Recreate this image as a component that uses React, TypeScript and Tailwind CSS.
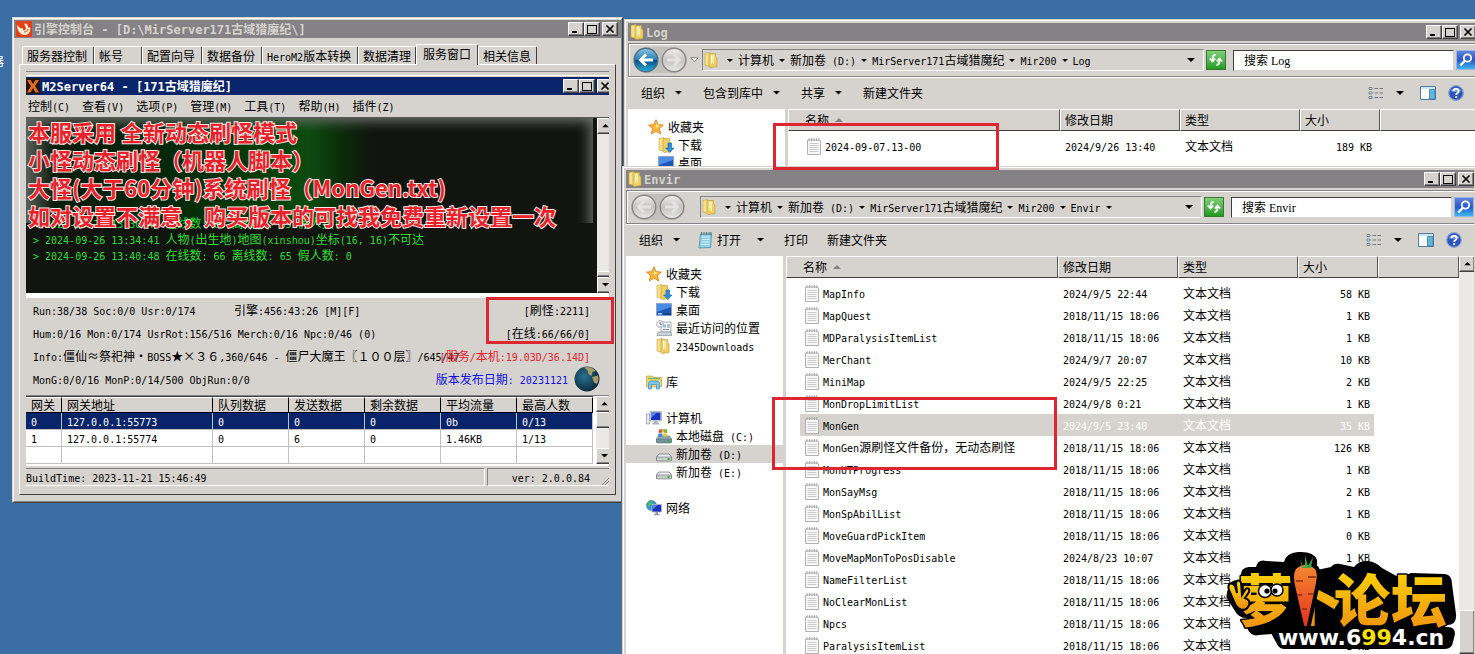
import type { ReactNode } from 'react'
import { clsx } from 'clsx'

const RAISED = 'bg-[#d6d3ce] border border-t-white border-l-white border-r-[#404040] border-b-[#404040] shadow-[inset_-1px_-1px_0_#848284]'

// Latin runs use a half-width mono face, everything else the CJK face
function Txt({ children, bold }: { children: string; bold?: boolean }) {
  const runs = children.match(/[\x20-\x7e]+|[^\x20-\x7e]+/g) ?? []
  return (
    <span className={clsx('whitespace-pre', bold && 'font-bold')}>
      {runs.map((run, i) =>
        /^[\x20-\x7e]/.test(run) ? (
          <span key={i} className={clsx("leading-none font-['DejaVu_Sans_Mono',monospace]", bold ? 'text-[12px]' : 'text-[10px]')}>
            {run}
          </span>
        ) : (
          <span key={i}>{run}</span>
        )
      )}
    </span>
  )
}

function Caret({ className = 'w-[7px]' }: { className?: string }) {
  return (
    <svg viewBox="0 0 8 4" className={clsx('shrink-0', className)} aria-hidden="true">
      <path d="M0 0h8L4 4z" fill="currentColor" />
    </svg>
  )
}

/* ---------- icons ---------- */

function FolderIcon() {
  return (
    <svg viewBox="0 0 14 16" className="h-4 w-[14px] shrink-0" aria-hidden="true">
      <path d="M1 1.5 6 .5v14L1 13z" fill="#f7e08a" stroke="#c9a43c" strokeWidth=".6" />
      <path d="M5 1.5h6.5v3L13 6v8.5L6 15.6 5 14z" fill="#edcf63" stroke="#bf9a35" strokeWidth=".6" />
      <path d="M7 2.5h1.5V10L7 12z" fill="#fffbe0" />
      <path d="M9.5 3v9" stroke="#f9eba8" />
    </svg>
  )
}

function DownloadFolderIcon() {
  return (
    <svg viewBox="0 0 16 16" className="size-4 shrink-0" aria-hidden="true">
      <path d="M1 1.5 6 .5v14L1 13z" fill="#f7e08a" stroke="#c9a43c" strokeWidth=".6" />
      <path d="M5 1.5h6.5v3L13 6v8.5L6 15.6 5 14z" fill="#edcf63" stroke="#bf9a35" strokeWidth=".6" />
      <path d="M10 6h3.5v5H16l-4.2 4.6L7.6 11H10z" fill="#2f8fdb" stroke="#1463a8" strokeWidth=".6" />
    </svg>
  )
}

function StarIcon() {
  return (
    <svg viewBox="0 0 16 16" className="size-4 shrink-0" aria-hidden="true">
      <path d="m8 .8 2.1 4.9 5.3.4-4 3.5 1.2 5.3L8 12.1l-4.6 2.8 1.2-5.3-4-3.5 5.3-.4z" fill="#fcb93a" stroke="#e07b1a" strokeWidth=".9" />
      <path d="m8 3 1.2 3.4 3.2.3-4.4 2z" fill="#fff0a8" />
    </svg>
  )
}

function DesktopIcon() {
  return (
    <svg viewBox="0 0 16 14" className="h-[14px] w-4 shrink-0" aria-hidden="true">
      <path d="M.5.5h15v12H.5z" fill="#1d57b4" stroke="#8aa3c8" />
      <path d="M1 1h14v3L1 9z" fill="#4b8ce6" />
      <path d="M2 10h4v1.5H2z" fill="#9cd0ff" />
      <path d="M7 10.5h8v1.5H7z" fill="#123a7c" />
    </svg>
  )
}

function RecentIcon() {
  return (
    <svg viewBox="0 0 16 16" className="size-4 shrink-0" aria-hidden="true">
      <path d="M5 2h10v10H5z" fill="#f5f8fb" stroke="#8d99a6" strokeWidth=".8" />
      <path d="M7 4.5h3v3H7z" fill="#8fc0ea" />
      <path d="M11 5h3M11 7h3M7 9.5h6" stroke="#7e8d9c" />
      <path d="M2 12h13l1 3.5H1z" fill="#c9d3dc" stroke="#7c8894" strokeWidth=".6" />
      <circle cx="4" cy="4" r="3.4" fill="#fff" stroke="#8d99a6" strokeWidth=".8" />
      <path d="M4 2v2.2h1.8" stroke="#445" strokeWidth=".8" fill="none" />
    </svg>
  )
}

function LibraryIcon() {
  return (
    <svg viewBox="0 0 16 16" className="size-4 shrink-0" aria-hidden="true">
      <path d="M.5 2h6l1 1.5h8V13H.5z" fill="#f0d673" stroke="#c6a440" strokeWidth=".7" />
      <path d="M2 4.5h12" stroke="#79b26a" strokeWidth="1.4" />
      <path d="M2.5 15V9.5C2.500 8 3.500 7 5 7h6c1.500 0 2.500 1 2.500 2.500V15h-3v-4.500h-5V15z" fill="#7cc5ee" stroke="#3a8fc4" strokeWidth=".7" />
    </svg>
  )
}

function ComputerIcon() {
  return (
    <svg viewBox="0 0 16 16" className="size-4 shrink-0" aria-hidden="true">
      <path d="M.5 4h3v10h-3z" fill="#e6eaee" stroke="#8a949e" strokeWidth=".7" />
      <path d="M4 1.500h11.500v9.500H4z" fill="#dfe4e8" stroke="#9aa4ae" strokeWidth=".7" />
      <path d="M5 2.500h9.500V10H5z" fill="#1b34c0" />
      <path d="M5 2.500h6L5 8z" fill="#5c86f0" />
      <path d="M8 11h3.500v2H13v1.500H6.500V13H8z" fill="#aab3bb" />
    </svg>
  )
}

function DriveIcon({ system }: { system?: boolean }) {
  return (
    <svg viewBox="0 0 16 16" className="size-4 shrink-0" aria-hidden="true">
      <path d="M3 8h10l2.500 3v3.500H.5V11z" fill={system ? '#7fb0b4' : '#f0f1f1'} stroke="#73797d" strokeWidth=".8" />
      <path d="M.5 11h15v3q-.5 1-1.500 1H2q-1 0-1.500-1z" fill={system ? '#6c9499' : '#c8cccd'} stroke="#6d7276" strokeWidth=".6" />
      <path d="M11.500 12h2v2h-2z" fill="#3fa82e" />
      {system && (
        <g>
          <path d="M3 1.500 6.500 1v3.500L2.500 5z" fill="#e8552d" />
          <path d="m7.300 1 4 .6-.4 3.600-3.600-.6z" fill="#7db72f" />
          <path d="m2.400 5.700 4-.5v3L2 8.500z" fill="#3b86e0" />
          <path d="m7.300 5.200 3.500.6-.4 3-3.100-.6z" fill="#f6c31c" />
        </g>
      )}
    </svg>
  )
}

function NetworkIcon() {
  return (
    <svg viewBox="0 0 16 16" className="size-4 shrink-0" aria-hidden="true">
      <circle cx="5.500" cy="5.500" r="5" fill="#2f9fd0" stroke="#1f74a3" strokeWidth=".6" />
      <path d="M2 3c2-2 4-2 5-1L5 5 3 5.500 1.500 8z" fill="#56bb52" />
      <path d="M6 4.500h9.500v7.500H6z" fill="#1b34c0" stroke="#b3bcc6" strokeWidth=".9" />
      <path d="M6.700 5.200h5l-5 4z" fill="#5c86f0" />
      <path d="M9.500 12h2.500v2h1.500v1.300H8V14h1.500z" fill="#8f9aa4" />
    </svg>
  )
}

function TextFileIcon() {
  return (
    <svg viewBox="0 0 14 17" className="h-[17px] w-[14px] shrink-0" aria-hidden="true">
      <path d="M1 2h11.500l1 1v13.500H.5V2z" fill="#f8f8f8" stroke="#a8a8a8" strokeWidth=".9" />
      <path d="M2 0v3M4.500 0v3M7 0v3M9.500 0v3M11.800 0v3" stroke="#9c9c9c" strokeWidth=".8" />
      <path d="M2.500 5.500h9M2.500 7.500h9M2.500 9.500h9M2.500 11.500h9M2.500 13.500h9" stroke="#c4c4c4" strokeWidth=".9" />
    </svg>
  )
}

function NotepadIcon() {
  return (
    <svg viewBox="0 0 15 17" className="h-[17px] w-[15px] shrink-0" aria-hidden="true">
      <path d="M2.500 2h11l-1 13.500-11.500.5z" fill="#8fd0e6" stroke="#4c8ba8" strokeWidth=".8" />
      <path d="M4 5h8M3.800 7.500h8M3.600 10h8M3.400 12.500h8" stroke="#d6f1fa" strokeWidth=".9" />
      <path d="M3.500 0v3M6 0v3M8.500 0v3M11 0v3M13 0v3" stroke="#47606c" strokeWidth=".9" />
    </svg>
  )
}

function ViewsIcon() {
  return (
    <svg viewBox="0 0 16 14" className="h-[14px] w-4 shrink-0" aria-hidden="true">
      <path d="M1 1.500h3v2H1zM1 6h3v2H1zM1 10.500h3v2H1z" fill="#fff" stroke="#6d8196" />
      <path d="M6.500 2.500h3.500M11.500 2.500H15M6.500 7h3.500M11.500 7H15M6.500 11.500h3.500M11.500 11.500H15" stroke="#6b7480" />
    </svg>
  )
}

function PaneIcon() {
  return (
    <svg viewBox="0 0 16 14" className="h-[14px] w-4 shrink-0" aria-hidden="true">
      <path d="M.5.5h15v13H.5z" fill="#fff" stroke="#4d7ba3" />
      <path d="M1 1h14v2H1z" fill="#cfe3f3" />
      <path d="M9.500 3.500H15V13H9.500z" fill="#61b4dc" stroke="#3e7ba6" strokeWidth=".8" />
    </svg>
  )
}

function HelpIcon() {
  return (
    <svg viewBox="0 0 16 16" className="size-4 shrink-0" aria-hidden="true">
      <circle cx="8" cy="8" r="7.300" fill="#2c56bd" stroke="#8ba1cc" strokeWidth="1.200" />
      <path d="M2.500 6a6 5 0 0 1 11 0q-5.500 2-11 0z" fill="#6d94e6" />
      <path d="M5.500 6.200c0-3.200 5.200-3.200 5.200 0 0 1.900-2.600 1.900-2.600 3.800" fill="none" stroke="#fff" strokeWidth="1.800" />
      <path d="M7.200 11.200h1.900v1.800H7.200z" fill="#fff" />
    </svg>
  )
}

function NavArrow({ dir, active }: { dir: 'back' | 'forward'; active?: boolean }) {
  return (
    <svg viewBox="0 0 26 26" className="size-[26px]" aria-hidden="true">
      <defs>
        <linearGradient id="navBlue" x1="0" y1="0" x2="0" y2="1">
          <stop offset="0" stopColor="#8cc6e6" />
          <stop offset=".48" stopColor="#2c7fb5" />
          <stop offset=".52" stopColor="#0a4f86" />
          <stop offset="1" stopColor="#21b4e4" />
        </linearGradient>
        <linearGradient id="navGray" x1="0" y1="0" x2="0" y2="1">
          <stop offset="0" stopColor="#f2f2f0" />
          <stop offset=".5" stopColor="#c4c3c1" />
          <stop offset="1" stopColor="#e9e8e6" />
        </linearGradient>
      </defs>
      <circle cx="13" cy="13" r="11.800" fill={active ? 'url(#navBlue)' : 'url(#navGray)'} stroke={active ? '#4b6d84' : '#888684'} strokeWidth="1.400" />
      <path
        d={dir === 'back' ? 'M20 13H8M13 7.500 7.500 13l5.500 5.500' : 'M6 13h12M13 7.500l5.500 5.500-5.500 5.500'}
        fill="none"
        stroke={active ? '#fff' : '#e4e3e1'}
        strokeWidth="2.800"
      />
    </svg>
  )
}

/* ---------- window chrome ---------- */

function WinButton({ label, className, children }: { label: string; className?: string; children: ReactNode }) {
  return (
    <button type="button" aria-label={label} className={clsx('flex h-[14px] w-4 shrink-0 items-center justify-center', RAISED, className)}>
      <svg viewBox="0 0 10 10" className="size-[10px]" fill="none" stroke="#000" aria-hidden="true" shapeRendering="crispEdges">
        {children}
      </svg>
    </button>
  )
}

function TitleBar({ icon, title, active, className }: { icon: ReactNode; title: string; active?: boolean; className?: string }) {
  return (
    <div
      className={clsx(
        'flex h-[18px] items-center',
        active ? 'bg-[#08246b] text-white' : 'bg-[#848284] text-[#d6d3ce]',
        className
      )}
    >
      {icon}
      <h2 className="ml-[2px] flex-1 leading-[18px]">
        <Txt bold>{title}</Txt>
      </h2>
      <WinButton label="最小化">
        <path d="M1 8h5" strokeWidth="2" />
      </WinButton>
      <WinButton label="最大化">
        <path d="M.5 1h9M.5 9.500h9M.5 1v8.500M9.500 1v8.500M.5 1.500h9" />
      </WinButton>
      <WinButton label="关闭" className="ml-[2px]">
        <path d="m1.500 1.500 7 7M8.500 1.500l-7 7" strokeWidth="1.600" shapeRendering="auto" />
      </WinButton>
    </div>
  )
}

function ScrollButton({ dir, className }: { dir: 'up' | 'down'; className?: string }) {
  return (
    <button type="button" aria-label={dir === 'up' ? '向上滚动' : '向下滚动'} className={clsx('flex h-4 w-4 shrink-0 items-center justify-center', RAISED, className)}>
      <Caret className={clsx('w-[7px]', dir === 'up' && 'rotate-180')} />
    </button>
  )
}

/* ---------- file explorer ---------- */

type FileRow = { name: string; date: string; size: string; selected?: boolean }
type NavItem = { label: string; icon: ReactNode; level: 1 | 2; selected?: boolean } | null

const CELL = 'border-t border-l border-r border-b border-t-white border-l-white border-r-[#5a5856] border-b-[#404040] bg-[#d6d3ce] pl-1 text-left font-normal'

function FileTable({ rows }: { rows: FileRow[] }) {
  return (
    <table className="w-full table-fixed border-separate border-spacing-0">
      <colgroup>
        <col className="w-[272px]" />
        <col className="w-[120px]" />
        <col className="w-[120px]" />
        <col className="w-[80px]" />
        <col />
      </colgroup>
      <thead>
        <tr className="h-[22px] leading-5">
          <th className={clsx(CELL, 'pl-4')}>
            <span className="flex items-center gap-[6px]">
              名称
              <Caret className="w-[8px] rotate-180 text-[#848284]" />
            </span>
          </th>
          <th className={CELL}>修改日期</th>
          <th className={CELL}>类型</th>
          <th className={CELL}>大小</th>
          <th className={CELL} aria-label="空白列" />
        </tr>
      </thead>
      <tbody>
        <tr className="h-1">
          <td colSpan={5} />
        </tr>
        {rows.map((row) => {
          const bg = row.selected && 'bg-[#d6d3ce]'
          const fg = row.selected && 'text-white'
          return (
            <tr key={row.name} className="h-[22px] leading-[22px]">
              <td className="pl-[14px]">
                <div className={clsx('flex h-[22px] items-center gap-1 whitespace-nowrap pl-[5px]', bg)}>
                  <TextFileIcon />
                  <Txt>{row.name}</Txt>
                </div>
              </td>
              <td>
                <div className={clsx('h-[22px] pl-[5px]', bg, fg)}>
                  <Txt>{row.date}</Txt>
                </div>
              </td>
              <td>
                <div className={clsx('h-[22px] pl-[5px]', bg, fg)}>文本文档</div>
              </td>
              <td>
                <div className={clsx('mr-1 h-[22px] pr-1 text-right', bg, fg)}>
                  <Txt>{row.size}</Txt>
                </div>
              </td>
              <td />
            </tr>
          )
        })}
      </tbody>
    </table>
  )
}

interface ExplorerProps {
  title: string
  path: string[]
  canGoBack?: boolean
  trailing?: boolean
  toolbar: ReactNode
  nav: NavItem[]
  rows: FileRow[]
  scrollbar?: boolean
  className?: string
}

function Explorer({ title, path, canGoBack, trailing, toolbar, nav, rows, scrollbar, className }: ExplorerProps) {
  return (
    <section
      aria-label={title}
      className={clsx('absolute flex flex-col border border-[#d6d3ce] bg-[#d6d3ce] p-[3px] shadow-[inset_1px_1px_0_#fff,-1px_0_0_#5a6a80]', className)}
    >
      <TitleBar icon={<FolderIcon />} title={title} className="shrink-0 pl-[2px]" />

      <div className="mt-[2px] flex h-[34px] shrink-0 items-center border-y border-l border-y-[#848284] border-l-[#848284] pl-1 shadow-[inset_1px_1px_0_#fff,0_1px_0_#fff]">
        <div className="flex w-[54px] shrink-0 gap-[2px] rounded-full bg-[#c2c0bd]">
          <button type="button" aria-label="后退">
            <NavArrow dir="back" active={canGoBack} />
          </button>
          <button type="button" aria-label="前进">
            <NavArrow dir="forward" />
          </button>
        </div>
        <span className="flex w-[15px] shrink-0 justify-center">
          {canGoBack && (
            <svg viewBox="0 0 10 6" className="w-[9px]" aria-hidden="true">
              <path d="M.8.8h8.400L5 5.300z" fill="#fff" stroke="#77777c" />
            </svg>
          )}
        </span>
        <div className="flex h-[22px] min-w-0 flex-1 items-center border border-t-[#848284] border-l-[#848284] border-r-white border-b-white pl-px leading-[18px]">
          <FolderIcon />
          <nav aria-label="路径" className="ml-[9px] flex items-center gap-[5px]">
            {path.map((part) => (
              <button key={part} type="button" className="flex items-center gap-[5px]">
                <Caret className="w-[6px]" />
                <Txt>{part}</Txt>
              </button>
            ))}
            {trailing && <Caret className="w-[6px]" />}
          </nav>
          <button type="button" aria-label="以前的位置" className="ml-auto mr-2">
            <Caret className="w-[8px]" />
          </button>
        </div>
        <button type="button" aria-label="刷新" className="ml-[2px] flex size-5 shrink-0 items-center justify-center border border-[#3a7a30] bg-linear-to-b from-[#7fd07a] to-[#1f9a1c]">
          <svg viewBox="0 0 16 16" className="size-4" fill="none" stroke="#fff" strokeWidth="1.800" aria-hidden="true">
            <path d="M7.500 3C5 3 4.500 4.500 4.500 8M1.800 6.500l2.700 3 2.700-3" />
            <path d="M8.500 13c2.500 0 3-1.500 3-5M8.800 9.500l2.700-3 2.700 3" />
          </svg>
        </button>
        <input
          type="text"
          aria-label={`搜索 ${title}`}
          defaultValue={`搜索 ${title}`}
          className="ml-[7px] h-[21px] w-[221px] shrink-0 border border-t-[#404040] border-l-[#404040] border-r-[#d6d3ce] border-b-[#d6d3ce] bg-white pl-[10px] font-['Liberation_Serif','Noto_Sans_CJK_SC',serif] text-[12px] outline-none"
        />
        <button type="button" aria-label="搜索" className="ml-[2px] flex size-5 shrink-0 items-center justify-center border border-[#9db5e6] bg-linear-to-b from-[#5f83d8] via-[#2a56c8] to-[#41b5f0]">
          <svg viewBox="0 0 16 16" className="size-4" fill="none" stroke="#fff" aria-hidden="true">
            <circle cx="9.500" cy="6" r="3.700" strokeWidth="1.800" />
            <path d="m6.800 8.700-4.500 4.800" strokeWidth="2.400" />
          </svg>
        </button>
      </div>

      <div className="flex h-8 shrink-0 items-center pl-[13px] pr-3 leading-5">
        {toolbar}
        <div className="ml-auto flex items-center">
          <button type="button" aria-label="更改视图" className="flex items-center gap-3">
            <ViewsIcon />
            <Caret className="w-[8px]" />
          </button>
          <button type="button" aria-label="预览窗格" className="ml-4">
            <PaneIcon />
          </button>
          <button type="button" aria-label="帮助" className="ml-3">
            <HelpIcon />
          </button>
        </div>
      </div>

      <div className="flex min-h-0 flex-1 overflow-hidden bg-white">
        <ul className="w-[157px] shrink-0 pt-[9px]">
          {nav.map((item, i) => (
            <li key={i} className={clsx('h-[18px] leading-[18px]', item?.selected && 'bg-[#d6d3ce]')}>
              {item && (
                <a href="#" className={clsx('flex items-center gap-1 whitespace-nowrap', item.level === 1 ? 'pl-5' : 'pl-[30px]')}>
                  <span className="flex w-4 shrink-0">{item.icon}</span>
                  <Txt>{item.label}</Txt>
                </a>
              )}
            </li>
          ))}
        </ul>
        <div className="w-[3px] shrink-0 bg-[#d6d3ce]" />
        <div className="min-w-0 flex-1 overflow-hidden">
          <FileTable rows={rows} />
        </div>
        {scrollbar && (
          <div className="flex w-[15px] shrink-0 flex-col bg-[#ebe9e6]">
            <ScrollButton dir="up" />
            <div className="flex-1" />
            <div className={clsx('h-[44px] w-4', RAISED)} />
          </div>
        )}
      </div>
    </section>
  )
}

function ToolItem({ label, caret, icon, className }: { label: string; caret?: boolean; icon?: ReactNode; className?: string }) {
  return (
    <button type="button" className={clsx('flex shrink-0 items-center', className)}>
      {icon}
      {label}
      {caret && <Caret className={clsx('w-[7px]', icon ? 'ml-4' : 'ml-[10px]')} />}
    </button>
  )
}

/* ---------- data ---------- */

const LOG_NAV: NavItem[] = [
  { label: '收藏夹', icon: <StarIcon />, level: 1 },
  { label: '下载', icon: <DownloadFolderIcon />, level: 2 },
  { label: '桌面', icon: <DesktopIcon />, level: 2 },
]

const ENVIR_NAV: NavItem[] = [
  ...LOG_NAV,
  { label: '最近访问的位置', icon: <RecentIcon />, level: 2 },
  { label: '2345Downloads', icon: <FolderIcon />, level: 2 },
  null,
  { label: '库', icon: <LibraryIcon />, level: 1 },
  null,
  { label: '计算机', icon: <ComputerIcon />, level: 1 },
  { label: '本地磁盘 (C:)', icon: <DriveIcon system />, level: 2 },
  { label: '新加卷 (D:)', icon: <DriveIcon />, level: 2, selected: true },
  { label: '新加卷 (E:)', icon: <DriveIcon />, level: 2 },
  null,
  { label: '网络', icon: <NetworkIcon />, level: 1 },
]

const OLD = '2018/11/15 18:06'

const ENVIR_FILES: FileRow[] = [
  { name: 'MapInfo', date: '2024/9/5 22:44', size: '58 KB' },
  { name: 'MapQuest', date: OLD, size: '1 KB' },
  { name: 'MDParalysisItemList', date: OLD, size: '1 KB' },
  { name: 'MerChant', date: '2024/9/7 20:07', size: '10 KB' },
  { name: 'MiniMap', date: '2024/9/5 22:25', size: '2 KB' },
  { name: 'MonDropLimitList', date: '2024/9/8 0:21', size: '1 KB' },
  { name: 'MonGen', date: '2024/9/5 23:40', size: '35 KB', selected: true },
  { name: 'MonGen源刷怪文件备份，无动态刷怪', date: OLD, size: '126 KB' },
  { name: 'MonUTProgress', date: OLD, size: '1 KB' },
  { name: 'MonSayMsg', date: OLD, size: '2 KB' },
  { name: 'MonSpAbilList', date: OLD, size: '1 KB' },
  { name: 'MoveGuardPickItem', date: OLD, size: '0 KB' },
  { name: 'MoveMapMonToPosDisable', date: '2024/8/23 10:07', size: '1 KB' },
  { name: 'NameFilterList', date: OLD, size: '1 KB' },
  { name: 'NoClearMonList', date: OLD, size: '1 KB' },
  { name: 'Npcs', date: OLD, size: '1 KB' },
  { name: 'ParalysisItemList', date: OLD, size: '1 KB' },
]

const TABS = [
  { label: '服务器控制', width: 'w-[72px]' },
  { label: '帐号', width: 'w-[48px]' },
  { label: '配置向导', width: 'w-[60px]' },
  { label: '数据备份', width: 'w-[60px]' },
  { label: 'HeroM2版本转换', width: 'w-[96px]' },
  { label: '数据清理', width: 'w-[58px]' },
  { label: '服务窗口', width: 'w-[62px]' },
  { label: '相关信息', width: 'w-[59px]' },
]

const GATE_HEAD = ['网关', '网关地址', '队列数据', '发送数据', '剩余数据', '平均流量', '最高人数']
const GATES = [
  ['0', '127.0.0.1:55773', '0', '0', '0', '0b', '0/13'],
  ['1', '127.0.0.1:55774', '0', '6', '0', '1.46KB', '1/13'],
  ['', '', '', '', '', '', ''],
]

/* ---------- M2Server console ---------- */

function GateTable() {
  return (
    <div className="flex border-t border-[#848284] bg-white pb-[2px]">
      <table className="w-[567px] table-fixed border-separate border-spacing-0 border-t border-t-[#404040]">
        <colgroup>
          <col className="w-[36px]" />
          <col className="w-[151px]" />
          <col className="w-[76px]" span={5} />
        </colgroup>
        <thead>
          <tr className="h-[16px] leading-[14px]">
            {GATE_HEAD.map((h) => (
              <th key={h} className="border-r border-b border-t border-[#000] border-t-white bg-[#d6d3ce] pl-[5px] text-left font-normal">
                {h}
              </th>
            ))}
          </tr>
        </thead>
        <tbody>
          {GATES.map((gate, i) => (
            <tr key={i} className={clsx('h-[17px] leading-4', i === 0 && 'bg-[#08246b] text-white')}>
              {gate.map((v, j) => (
                <td key={j} className="border-r border-b border-[#c0c0c0] pl-[5px]">
                  <Txt>{v}</Txt>
                </td>
              ))}
            </tr>
          ))}
        </tbody>
      </table>
      <div className="ml-[3px] flex flex-1 flex-col overflow-hidden bg-[#ebe9e6]">
        <ScrollButton dir="up" />
        <div className={clsx('h-4 w-4', RAISED)} />
        <div className="flex-1" />
        <ScrollButton dir="down" />
      </div>
    </div>
  )
}

function ServerPanel() {
  return (
    <div className="mt-[6px] ml-[6px] mr-[6px] overflow-hidden border-t border-t-[#848284]">
      <div className="mt-[3px] border-t border-white pt-px">
        <TitleBar
          active
          title="M2Server64 - [171古域猎魔纪]"
          className="-mr-[7px] pr-[3px]"
          icon={
            <svg viewBox="0 0 14 16" className="h-4 w-[14px]" aria-hidden="true">
              <path d="M0 0h14v16H0z" fill="#1f1712" />
              <path d="M1 2h3.500L7 6l2.500-4H13L9 8l4 6.500H9.500L7 10l-2.500 4.500H1L5 8z" fill="#e86a1c" />
            </svg>
          }
        />
      </div>
      <div className="flex h-[22px] items-center gap-3 pl-[2px] leading-5">
        {['控制(C)', '查看(V)', '选项(P)', '管理(M)', '工具(T)', '帮助(H)', '插件(Z)'].map((m) => (
          <button key={m} type="button">
            <Txt>{m}</Txt>
          </button>
        ))}
      </div>

      <div className="flex h-[176px] border-t border-[#5a5856] bg-[#121410]">
        <div className="min-w-0 flex-1">
          <div className="mr-1 h-[105px] bg-[linear-gradient(90deg,#5a5f5a_0%,#0b1c0b_5%,#04280a_25%,#063a08_40%,#0d4c10_50%,#0a2a0a_56%,#121410_61%)] shadow-[inset_-12px_12px_12px_-8px_#686a66]" />
          <div className="-mt-2 pl-[7px] leading-4 text-[#31dd31]">
            <p>
              <Txt>{'> 2024-09-26 13:30:48 在线数: 66 离线数: 65 假人数: 0'}</Txt>
            </p>
            <p>
              <Txt>{'> 2024-09-26 13:34:41 人物(出生地)地图(xinshou)坐标(16, 16)不可达'}</Txt>
            </p>
            <p>
              <Txt>{'> 2024-09-26 13:40:48 在线数: 66 离线数: 65 假人数: 0'}</Txt>
            </p>
          </div>
        </div>
        <div className="flex w-3 flex-col overflow-hidden bg-[#ebe9e6]">
          <ScrollButton dir="up" />
          <div className="flex-1" />
          <div className={clsx('h-[6px] w-4', RAISED)} />
          <ScrollButton dir="down" />
        </div>
      </div>
      <div className="h-[5px] bg-white" />

      <div className="pl-[7px] pr-[19px] leading-[23px]">
        <div className="flex">
          <span className="w-[201px]">
            <Txt>Run:38/38 Soc:0/0 Usr:0/174</Txt>
          </span>
          <Txt>引擎:456:43:26 [M][F]</Txt>
          <span className="ml-auto">
            <Txt>[刷怪:2211]</Txt>
          </span>
        </div>
        <div className="flex justify-between">
          <Txt>Hum:0/16 Mon:0/174 UsrRot:156/516 Merch:0/16 Npc:0/46 (0)</Txt>
          <Txt>[在线:66/66/0]</Txt>
        </div>
        <div className="flex">
          <span className="min-w-0 flex-1">
            <Txt>Info:僵仙≈祭祀神·BOSS★×３６,360/646 - 僵尸大魔王〖１００层〗/645/47</Txt>
          </span>
          <span className="shrink-0 text-[#e8202a]">
            <Txt>[服务/本机:19.03D/36.14D]</Txt>
          </span>
        </div>
        <div className="-mr-[10px] flex items-center">
          <span className="flex-1">
            <Txt>MonG:0/0/16 MonP:0/14/500 ObjRun:0/0</Txt>
          </span>
          <span className="text-[#1010e0]">
            <Txt>版本发布日期: 20231121</Txt>
          </span>
          <svg viewBox="0 0 26 26" className="-my-1 ml-[6px] size-[26px]" aria-hidden="true">
            <defs>
              <radialGradient id="globe" cx=".4" cy=".4" r=".6">
                <stop offset="0" stopColor="#2a7391" />
                <stop offset="1" stopColor="#0d2c40" />
              </radialGradient>
            </defs>
            <circle cx="13" cy="13" r="12.500" fill="url(#globe)" />
            <path d="M10 1.500c4-1.500 9 0 11.500 3.500l-3 1-1 4-3-2-1-3.500zM18 11l6-1.500c1 3 .5 6-1 8.500l-3-1.500z" fill="#a59c6c" />
          </svg>
        </div>
      </div>

      <div className="mt-[5px]">
        <GateTable />
      </div>
      <div className="mt-[2px] flex h-[18px] gap-[2px] leading-4">
        <div className="flex-1 border-y border-r border-y-[#848284] border-b-white border-r-white">
          <Txt>BuildTime: 2023-11-21 15:46:49</Txt>
        </div>
        <div className="relative w-[122px] border-y border-l border-[#848284] border-b-white pr-[19px] text-right">
          <Txt>ver: 2.0.0.84</Txt>
          <svg viewBox="0 0 8 8" className="absolute right-0 bottom-0 size-2" stroke="#848284" aria-hidden="true">
            <path d="M1 8l7-7M4 8l4-4" />
          </svg>
        </div>
      </div>
    </div>
  )
}

function ControlWindow() {
  return (
    <section
      aria-label="引擎控制台"
      className="absolute top-[17px] left-[12px] w-[611px] border border-[#d6d3ce] border-r-[#404040] border-b-[#404040] bg-[#d6d3ce] p-px pt-[2px] pb-[7px] shadow-[inset_1px_1px_0_#fff,inset_-1px_-1px_0_#848284]"
    >
      <TitleBar
        title="引擎控制台 - [D:\MirServer171古域猎魔纪\]"
        className="pl-[2px] pr-[3px]"
        icon={
          <svg viewBox="0 0 16 16" className="size-4" aria-hidden="true">
            <path d="M0 0h16v16H0z" fill="#e5401a" />
            <path d="M9 2C7 5 12 6 9 9c-1 1-3 0-2-2-4 1-4-2-6-3 0 5 3 10 8 10 4 0 6-4 5-8-1 1-2 1-2 0 0-2-1-3-3-4z" fill="#fff3d0" />
            <path d="M8 11c2 0 4-1 4-3" stroke="#e5401a" fill="none" />
          </svg>
        }
      />
      <div role="tablist" className="mt-[6px] flex h-5 items-end pl-2 leading-[18px]">
        {TABS.map((tab) => {
          const selected = tab.label === '服务窗口'
          return (
            <button
              key={tab.label}
              type="button"
              role="tab"
              aria-selected={selected}
              className={clsx(
                'shrink-0 rounded-t-[2px] border-t border-l border-r border-t-white border-l-white border-r-[#404040] bg-[#d6d3ce] pl-1 text-left whitespace-nowrap',
                selected ? 'relative z-10 -mb-px h-[21px] pb-1 pl-[6px]' : 'h-[18px]',
                tab.width
              )}
            >
              <Txt>{tab.label}</Txt>
            </button>
          )
        })}
      </div>
      <div role="tabpanel" className="mr-[5px] ml-[5px] border border-white border-r-[#404040] border-b-[#404040] pb-2">
        <ServerPanel />
      </div>
    </section>
  )
}

/* ---------- overlays ---------- */

const STROKED = '[paint-order:stroke] [stroke-linejoin:round]'

function ForumLogo() {
  return (
    <svg viewBox="0 0 240 104" className="absolute right-[12px] bottom-0 h-[104px] w-[240px]" role="img" aria-label="萝卜论坛">
      <defs>
        <linearGradient id="gold" x1="0" y1="0" x2="0" y2="1">
          <stop offset="0" stopColor="#ffe100" />
          <stop offset="1" stopColor="#ee8a12" />
        </linearGradient>
        <linearGradient id="carrot" x1="0" y1="0" x2="0" y2="1">
          <stop offset="0" stopColor="#f28a2e" />
          <stop offset="1" stopColor="#e5301f" />
        </linearGradient>
      </defs>
      {/* black backing shared by glyphs, hand and carrot */}
      <path
        d="M6 38q0-8 9-8l4 2-1-8q0-6 8-7h7q2-8 10-6l18 1q2-9 14-10 16-1 19 8v10l14-3q3-4 9-3l14 3q5-7 14-6 8 1 14 7l18 10 6-3 5-2 34 1q7 1 7 10l4 30q1 11-9 11l-25 5-24 2H76l-40 3q-7 2-11-5-2-5 1-12-10 1-14-7L5 50q-3-7 1-12z"
        fill="#000"
      />
      <path d="M55 77h170q7 0 7 7l-2 8q-1 7-8 7H62q-6 0-8-5l-5-9q-1-7 6-8z" fill="#000" />
      <g className={clsx("font-['Noto_Sans_CJK_SC',sans-serif] font-black", STROKED)} fill="url(#gold)" stroke="#000" strokeWidth="3">
        <text x="15" y="71" fontSize="56">萝</text>
        <text x="64" y="70" fontSize="56">卜</text>
        <text x="111" y="71" fontSize="56">论</text>
        <text x="168" y="72" fontSize="56">坛</text>
      </g>
      <path d="M12 36c-4-5-8-2-6 4l6 14c3 6 10 8 13 3 3-4 1-8-3-9l4-6c1-4-2-5-4-2l-3 5-1-12c-1-4-5-3-5 1l1 9z" fill="url(#gold)" stroke="#000" strokeWidth="2" />
      <circle cx="42" cy="41" r="6.500" fill="#fff" stroke="#000" strokeWidth="1.500" />
      <circle cx="54" cy="40" r="6" fill="#fff" stroke="#000" strokeWidth="1.500" />
      <circle cx="44" cy="41" r="2.600" />
      <circle cx="52" cy="41" r="2.600" />
      <path d="M73 19q9-8 19 0 3 4 1 14L84 75q-1 3-3 0L73 40q-4-15 0-21z" fill="url(#carrot)" stroke="#000" strokeWidth="8" className={STROKED} />
      <path d="M73 31h7M85 27h8M74 45h5M85 44h6M79 59h5" stroke="#8c2a10" strokeWidth="1.600" />
      <path d="m77 8 3 9h2V5l3 11 5-9-2 11h-9z" fill="#35a34b" />
      <text x="55" y="95" fontSize="22" fill="#fff" stroke="#000" strokeWidth="2" className={clsx("font-['DejaVu_Sans',sans-serif] font-bold", STROKED)}>
        www.6<tspan fill="#ffe100">99</tspan>4.cn
      </text>
    </svg>
  )
}

function Notice() {
  return (
    <div className={clsx("pointer-events-none absolute top-[117px] left-[28px] text-[22px] leading-[28px] font-bold whitespace-nowrap text-[#e8212b] [-webkit-text-stroke:2px_#f6e8e4]", STROKED)}>
      <p>本服采用 全新动态刷怪模式</p>
      <p>小怪动态刷怪（机器人脚本）</p>
      <p>大怪(大于60分钟)系统刷怪（MonGen.txt)</p>
      <p>如对设置不满意，购买版本的可找我免费重新设置一次</p>
    </div>
  )
}

export default function App() {
  return (
    <main className="relative h-screen min-h-[654px] overflow-hidden bg-[#3a6ea5] font-['Noto_Sans_CJK_SC',sans-serif] text-[12px] leading-4 text-black" lang="zh-CN">
      <span className="absolute top-[53px] left-[-8px] text-white">器</span>

      <ControlWindow />

      <Explorer
        title="Log"
        path={['计算机', '新加卷 (D:)', 'MirServer171古域猎魔纪', 'Mir200', 'Log']}
        canGoBack
        nav={LOG_NAV}
        rows={[{ name: '2024-09-07.13-00', date: '2024/9/26 13:40', size: '189 KB' }]}
        className="top-[19px] right-[-5px] left-[624px] h-[160px]"
        toolbar={
          <>
            <ToolItem label="组织" caret />
            <ToolItem label="包含到库中" caret className="ml-[21px]" />
            <ToolItem label="共享" caret className="ml-[21px]" />
            <ToolItem label="新建文件夹" className="ml-[21px]" />
          </>
        }
      />

      <Explorer
        title="Envir"
        path={['计算机', '新加卷 (D:)', 'MirServer171古域猎魔纪', 'Mir200', 'Envir']}
        trailing
        scrollbar
        nav={ENVIR_NAV}
        rows={ENVIR_FILES}
        className="top-[166px] right-[-3px] bottom-[-4px] left-[622px]"
        toolbar={
          <>
            <ToolItem label="组织" caret />
            <ToolItem label="打开" caret icon={<span className="mr-1"><NotepadIcon /></span>} className="ml-[18px]" />
            <ToolItem label="打印" className="ml-5" />
            <ToolItem label="新建文件夹" className="ml-[19px]" />
          </>
        }
      />

      <Notice />

      {/* highlight frames */}
      <div className="pointer-events-none absolute top-[297px] left-[486px] h-[47px] w-[128px] border-3 border-[#dc2630]" />
      <div className="pointer-events-none absolute top-[123px] left-[773px] h-[47px] w-[226px] border-3 border-[#dc2630]" />
      <div className="pointer-events-none absolute top-[397px] left-[772px] h-[73px] w-[285px] border-3 border-[#dc2630]" />

      <ForumLogo />
    </main>
  )
}
